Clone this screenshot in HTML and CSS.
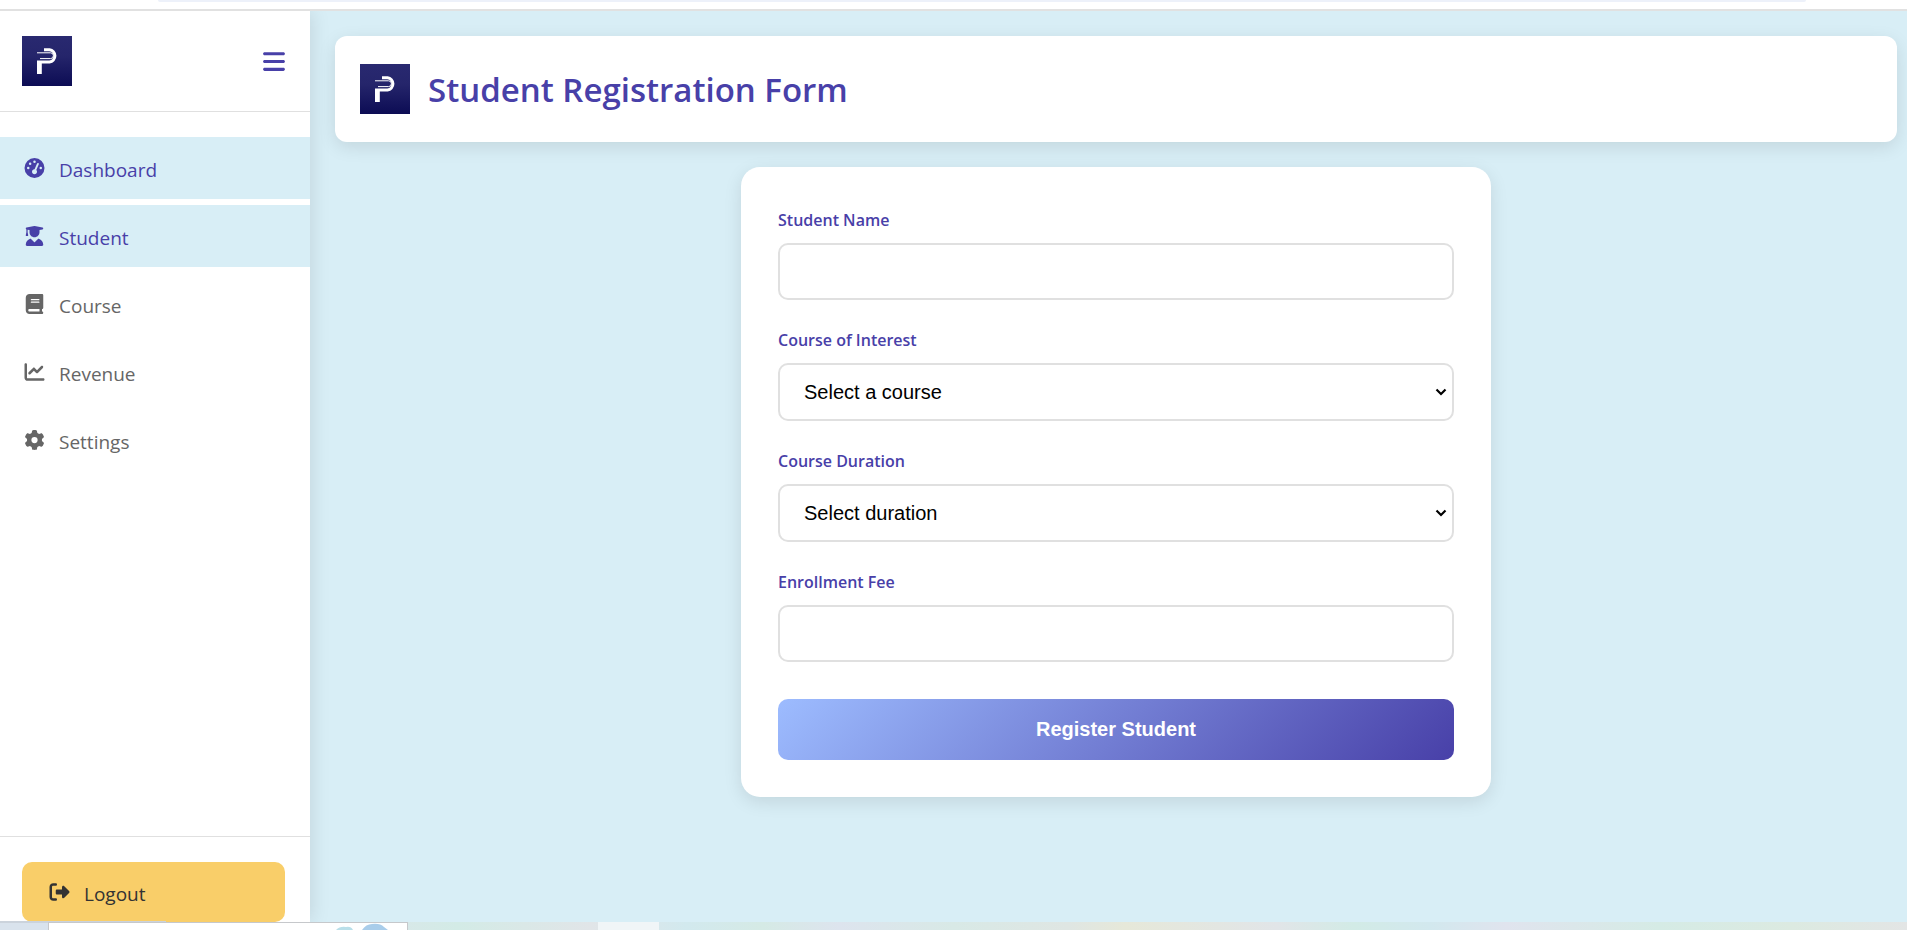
FILE: index.html
```html
<!DOCTYPE html>
<html lang="en">
<head>
<meta charset="utf-8">
<title>Student Registration Form</title>
<link rel="stylesheet" href="styles.css">
</head>
<body>
<svg class="defs" aria-hidden="true">
  <defs>
    <linearGradient id="logo-bg" x1="0" y1="0" x2="0" y2="1">
      <stop offset="0" stop-color="#292970"/>
      <stop offset="0.4" stop-color="#25256b"/>
      <stop offset="1" stop-color="#0c0c54"/>
    </linearGradient>
    <symbol id="logo" viewBox="0 0 50 50">
      <rect width="50" height="50" fill="url(#logo-bg)"/>
      <g fill="none" stroke="#fff">
        <path stroke-width="3" d="M22 13.700H27.500A6.200 6.200 0 0 1 27.500 26H15"/>
        <path stroke-width="1" d="M15 16.800H28.500A2.900 2.900 0 0 1 28.500 22.600H18"/>
        <path stroke-width="4.800" d="M17.400 38V25"/>
      </g>
    </symbol>
  </defs>
</svg>
<div class="browser-edge"><div class="address-bar"></div></div>
<div class="app">
  <aside class="sidebar">
    <div class="sidebar-header">
      <svg class="logo" role="img" aria-label="Logo"><use href="#logo"/></svg>
      <button class="menu-toggle" type="button" aria-label="Toggle menu">
        <svg viewBox="0 0 448 512" class="icon-bars"><path d="M0 96C0 78.3 14.3 64 32 64H416c17.7 0 32 14.3 32 32s-14.3 32-32 32H32C14.3 128 0 113.7 0 96zM0 256c0-17.7 14.3-32 32-32H416c17.7 0 32 14.3 32 32s-14.3 32-32 32H32c-17.7 0-32-14.3-32-32zM448 416c0 17.7-14.3 32-32 32H32c-17.7 0-32-14.3-32-32s14.3-32 32-32H416c17.7 0 32 14.3 32 32z"/></svg>
      </button>
    </div>
    <nav class="nav">
      <a class="nav-link active" href="#dashboard">
        <svg class="icon" viewBox="0 0 512 512"><path d="M0 256a256 256 0 1 1 512 0A256 256 0 1 1 0 256zM288 96a32 32 0 1 0 -64 0 32 32 0 1 0 64 0zM256 416c35.3 0 64-28.7 64-64c0-17.4-6.900-33.100-18.100-44.600L366 161.700c5.300-12.100-.2-26.300-12.300-31.600s-26.300 .2-31.600 12.300L257.900 288c-.6 0-1.300 0-1.900 0c-35.300 0-64 28.700-64 64s28.700 64 64 64zM176 144a32 32 0 1 0 -64 0 32 32 0 1 0 64 0zM96 288a32 32 0 1 0 0-64 32 32 0 1 0 0 64zm352-32a32 32 0 1 0 -64 0 32 32 0 1 0 64 0z"/></svg>
        <span class="nav-text">Dashboard</span>
      </a>
      <a class="nav-link active" href="#student">
        <svg class="icon" viewBox="0 0 448 512"><path d="M219.3 .5c3.1-.6 6.3-.6 9.4 0l200 40C439.9 42.7 448 52.6 448 64s-8.1 21.3-19.3 23.5L352 102.9V160c0 70.7-57.3 128-128 128s-128-57.3-128-128V102.9L48 93.3v65.1l15.7 78.4c.9 4.7-.3 9.6-3.3 13.3s-7.6 5.9-12.4 5.9H16c-4.8 0-9.3-2.1-12.4-5.9s-4.3-8.6-3.3-13.3L16 158.4V86.6C6.5 83.3 0 74.3 0 64C0 52.6 8.1 42.7 19.3 40.5l200-40zM111.900 327.700c10.500-3.400 21.800 .4 29.400 8.500l71 75.500c6.300 6.700 17 6.700 23.300 0l71-75.500c7.600-8.100 18.900-11.900 29.400-8.500C401 348.600 448 409.400 448 481.300c0 17-13.800 30.700-30.700 30.700H30.700C13.800 512 0 498.200 0 481.300c0-71.900 47-132.700 111.900-153.600z"/></svg>
        <span class="nav-text">Student</span>
      </a>
      <a class="nav-link" href="#course">
        <svg class="icon" viewBox="0 0 448 512"><path d="M96 0C43 0 0 43 0 96V416c0 53 43 96 96 96H384h32c17.7 0 32-14.3 32-32s-14.3-32-32-32V384c17.7 0 32-14.3 32-32V32c0-17.7-14.3-32-32-32H384 96zm0 384H352v64H96c-17.7 0-32-14.3-32-32s14.3-32 32-32zm32-240c0-8.8 7.2-16 16-16H336c8.8 0 16 7.2 16 16s-7.2 16-16 16H144c-8.8 0-16-7.2-16-16zm16 48H336c8.8 0 16 7.2 16 16s-7.2 16-16 16H144c-8.8 0-16-7.2-16-16s7.2-16 16-16z"/></svg>
        <span class="nav-text">Course</span>
      </a>
      <a class="nav-link" href="#revenue">
        <svg class="icon" viewBox="0 0 512 512"><path d="M64 64c0-17.7-14.3-32-32-32S0 46.3 0 64V400c0 44.2 35.8 80 80 80H480c17.7 0 32-14.3 32-32s-14.3-32-32-32H80c-8.8 0-16-7.2-16-16V64zm406.600 86.600c12.500-12.500 12.500-32.800 0-45.300s-32.800-12.500-45.300 0L320 210.700l-57.400-57.400c-12.500-12.500-32.800-12.500-45.300 0l-112 112c-12.500 12.500-12.500 32.800 0 45.300s32.800 12.500 45.300 0L240 221.300l57.400 57.400c12.500 12.500 32.800 12.500 45.300 0l128-128z"/></svg>
        <span class="nav-text">Revenue</span>
      </a>
      <a class="nav-link" href="#settings">
        <svg class="icon" viewBox="0 0 512 512"><path d="M495.9 166.6c3.2 8.7 .5 18.4-6.4 24.6l-43.300 39.400c1.100 8.300 1.700 16.800 1.700 25.400s-.6 17.100-1.700 25.400l43.300 39.400c6.900 6.200 9.600 15.900 6.400 24.600c-4.400 11.900-9.700 23.300-15.800 34.300l-4.700 8.100c-6.600 11-14 21.400-22.100 31.200c-5.900 7.200-15.700 9.600-24.500 6.800l-55.700-17.700c-13.400 10.300-28.200 18.900-44 25.400l-12.500 57.100c-2 9.100-9 16.300-18.200 17.800c-13.800 2.300-28 3.500-42.500 3.500s-28.700-1.200-42.500-3.500c-9.200-1.500-16.200-8.700-18.200-17.800l-12.500-57.100c-15.800-6.500-30.600-15.100-44-25.400L83.100 425.900c-8.800 2.800-18.600 .3-24.500-6.800c-8.100-9.800-15.500-20.200-22.100-31.200l-4.700-8.100c-6.100-11-11.400-22.400-15.800-34.300c-3.200-8.700-.5-18.400 6.400-24.600l43.300-39.400C64.600 273.100 64 264.600 64 256s.6-17.100 1.700-25.400L22.400 191.200c-6.900-6.200-9.600-15.900-6.400-24.600c4.400-11.900 9.700-23.300 15.800-34.300l4.700-8.100c6.600-11 14-21.400 22.100-31.200c5.900-7.200 15.700-9.600 24.500-6.800l55.700 17.700c13.400-10.300 28.200-18.900 44-25.400l12.500-57.100c2-9.100 9-16.300 18.200-17.800C227.300 1.200 241.500 0 256 0s28.700 1.200 42.500 3.500c9.200 1.500 16.200 8.700 18.200 17.800l12.500 57.100c15.800 6.500 30.600 15.100 44 25.400l55.700-17.700c8.800-2.800 18.600-.3 24.500 6.800c8.100 9.800 15.500 20.200 22.100 31.200l4.700 8.100c6.100 11 11.400 22.400 15.800 34.300zM256 336a80 80 0 1 0 0-160 80 80 0 1 0 0 160z"/></svg>
        <span class="nav-text">Settings</span>
      </a>
    </nav>
    <div class="sidebar-footer">
      <button class="logout" type="button">
        <svg class="icon" viewBox="0 0 512 512"><path d="M377.900 105.900L500.700 228.700c7.200 7.200 11.300 17.100 11.300 27.300s-4.100 20.100-11.300 27.300L377.900 406.100c-6.400 6.400-15 9.900-24 9.900c-18.700 0-33.900-15.200-33.900-33.900l0-62.100-128 0c-17.700 0-32-14.300-32-32l0-64c0-17.700 14.300-32 32-32l128 0 0-62.100c0-18.700 15.200-33.900 33.900-33.900c9 0 17.600 3.600 24 9.900zM160 96L96 96c-17.700 0-32 14.300-32 32l0 256c0 17.700 14.300 32 32 32l64 0c17.700 0 32 14.300 32 32s-14.300 32-32 32l-64 0c-53 0-96-43-96-96L0 128C0 75 43 32 96 32l64 0c17.700 0 32 14.300 32 32s-14.300 32-32 32z"/></svg>
        <span class="nav-text">Logout</span>
      </button>
    </div>
  </aside>
  <main class="content">
    <header class="page-header">
      <svg class="logo" role="img" aria-label="Logo"><use href="#logo"/></svg>
      <h1 class="page-title">Student Registration Form</h1>
    </header>
    <form class="form-card">
      <div class="field">
        <label for="name">Student Name</label>
        <input class="control" id="name" type="text">
      </div>
      <div class="field">
        <label for="course">Course of Interest</label>
        <select class="control" id="course"><option>Select a course</option></select>
      </div>
      <div class="field">
        <label for="duration">Course Duration</label>
        <select class="control" id="duration"><option>Select duration</option></select>
      </div>
      <div class="field">
        <label for="fee">Enrollment Fee</label>
        <input class="control" id="fee" type="text">
      </div>
      <button class="submit" type="submit">Register Student</button>
    </form>
  </main>
</div>
<footer class="taskbar">
  <div class="status-line"></div>
  <div class="preview">
    <svg class="clouds" viewBox="0 0 60 7"><path fill="#b9dfe9" d="M0 7Q4 3 10 4Q15 3 17 7z"/><path fill="#a9cdea" d="M26 7Q30 1 36 1Q44 0 48 4L52 7z"/></svg>
  </div>
  <div class="task-active"></div>
</footer>
</body>
</html>
```
FILE: styles.css
```css
* {
  box-sizing: border-box;
}

body {
  margin: 0;
  height: 100vh;
  display: flex;
  flex-direction: column;
  overflow: hidden;
  background: #d8eef6;
  font-family: "Segoe UI", "Open Sans", "Noto Sans", sans-serif;
}

.defs {
  position: absolute;
  width: 0;
  height: 0;
}

.browser-edge {
  flex: none;
  height: 11px;
  padding: 0 101px 0 158px;
  background: #fff;
  border-bottom: 2px solid #e1e1e1;
}

.address-bar {
  height: 2px;
  background: #edf1fa;
  border-radius: 0 0 8px 8px;
}

.app {
  flex: 1;
  min-height: 0;
  display: flex;
  overflow: hidden;
}

.sidebar {
  flex: none;
  width: 310px;
  display: flex;
  flex-direction: column;
  background: #fff;
  box-shadow: 2px 0 18px rgba(0, 0, 0, 0.1);
}

.sidebar-header {
  display: flex;
  align-items: center;
  justify-content: space-between;
  padding: 25px 25px 25px 22px;
  border-bottom: 1px solid #e0e0e0;
}

.logo {
  display: block;
  flex: none;
  width: 50px;
  height: 50px;
}

.menu-toggle {
  padding: 0;
  border: 0;
  background: none;
  color: #4840a8;
  cursor: pointer;
}

.icon-bars {
  display: block;
  width: 22px;
  height: 25px;
  fill: currentColor;
}

.nav {
  flex: 1;
  display: flex;
  flex-direction: column;
  gap: 6px;
  padding: 25px 0;
}

.nav-link {
  display: flex;
  align-items: center;
  gap: 14px;
  height: 62px;
  padding: 0 24px;
  color: #666;
  font-size: 19px;
  text-decoration: none;
}

.nav-link.active {
  background: #d8eef6;
  color: #4840a8;
}

.nav-text {
  padding-top: 3px;
}

.icon {
  flex: none;
  width: 21px;
  height: 20px;
  fill: currentColor;
}

.sidebar-footer {
  padding: 25px 25px 0 22px;
  border-top: 1px solid #e0e0e0;
}

.logout {
  display: flex;
  align-items: center;
  gap: 14px;
  width: 100%;
  height: 60px;
  padding: 0 27px;
  border: 0;
  border-radius: 10px;
  background: #f9ce69;
  color: #333;
  font-family: inherit;
  font-size: 19px;
  cursor: pointer;
}

.content {
  flex: 1;
  display: flex;
  flex-direction: column;
  gap: 25px;
  padding: 25px 10px 25px 25px;
}

.page-header {
  display: flex;
  align-items: center;
  gap: 18px;
  padding: 25px;
  background: #fff;
  border-radius: 12px;
  box-shadow: 0 5px 18px rgba(0, 0, 0, 0.1);
}

.page-title {
  margin: 0;
  padding-top: 2px;
  color: #4840a8;
  font-size: 33px;
  font-weight: 600;
  line-height: 54px;
}

.form-card {
  display: flex;
  flex-direction: column;
  gap: 24px;
  width: 100%;
  max-width: 750px;
  margin: 0 auto;
  padding: 37px;
  background: #fff;
  border-radius: 19px;
  box-shadow: 0 5px 18px rgba(0, 0, 0, 0.1);
}

.field {
  display: flex;
  flex-direction: column;
  gap: 6px;
}

.field label {
  color: #4840a8;
  font-size: 16px;
  font-weight: 600;
  line-height: 33px;
}

.control {
  width: 100%;
  height: 57px;
  padding: 15px 20px;
  border: 2px solid #e0e0e0;
  border-radius: 10px;
  background: #fff;
  color: #000;
  font-family: Arial, "Liberation Sans", sans-serif;
  font-size: 20px;
}

select.control {
  height: 58px;
  padding: 0 24px;
  appearance: none;
  background: #fff url("data:image/svg+xml,%3Csvg xmlns='http://www.w3.org/2000/svg' width='12' height='8'%3E%3Cpath d='M1.5 1.5L6 6L10.5 1.5' fill='none' stroke='%23000' stroke-width='2.2'/%3E%3C/svg%3E") no-repeat right 5px center;
}

.submit {
  height: 61px;
  margin-top: 13px;
  border: 0;
  border-radius: 10px;
  background: linear-gradient(135deg, #9dbcff, #4840a8);
  color: #fff;
  font-family: Arial, "Liberation Sans", sans-serif;
  font-size: 20px;
  font-weight: 700;
  cursor: pointer;
}

.taskbar {
  position: relative;
  flex: none;
  height: 8px;
  background: linear-gradient(90deg, #d9e3ed 0 3%, #d9e7e9 20%, #d3ebe6 24%, #e1e5e8 31%, #d2e9ee 36%, #d5eae5 40%, #dde4ee 44%, #d8e9e6 50%, #dfe6e3 56%, #e6e8d9 59%, #e1e5e8 67%, #d2ebe6 71%, #d2e8ee 75%, #e0e4ee 79%, #d5ebe5 87%, #dceae1 94%, #e3e5e5 100%);
}

.status-line {
  position: absolute;
  top: -1px;
  left: 0;
  width: 166px;
  height: 2px;
  background: #cbd3dc;
}

.preview {
  position: absolute;
  top: 0;
  left: 48px;
  width: 360px;
  height: 8px;
  border: 1px solid #c6c8cb;
  border-bottom: 0;
  background: #fff;
}

.clouds {
  position: absolute;
  top: 0;
  right: 11px;
  width: 60px;
  height: 7px;
}

.task-active {
  position: absolute;
  top: 0;
  left: 598px;
  width: 61px;
  height: 8px;
  background: #f0f5f7;
}
```
